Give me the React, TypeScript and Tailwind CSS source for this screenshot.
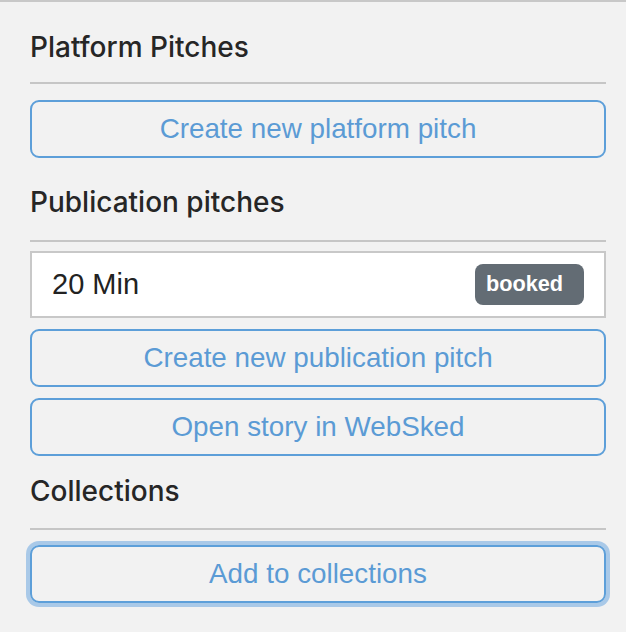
const headingFont = "font-['Inter','Noto_Sans',sans-serif]";
const bodyFont = "font-['Liberation_Sans','Arial',sans-serif]";

function SectionHeading({ title, className }: { title: string; className: string }) {
  return (
    <h2 className={`${headingFont} text-[28px] leading-[32px] font-medium text-[#262626] ${className}`}>{title}</h2>
  );
}

function OutlineButton({ label, focused = false }: { label: string; focused?: boolean }) {
  return (
    <button
      type="button"
      className={`flex h-[58px] w-full items-center justify-center rounded-[9px] border-2 border-[#5d9fd9] bg-transparent ${bodyFont} text-[27.8px] text-[#5b9bd5] ${
        focused ? "shadow-[0_0_0_4px_#a9c9e8]" : ""
      }`}
    >
      {label}
    </button>
  );
}

export default function App() {
  return (
    <div className="min-h-screen border-t-2 border-[#c8c8c8] bg-[#f2f2f2] pt-[29px] pr-[20px] pl-[30px]">
      <SectionHeading title="Platform Pitches" className="" />
      <div className="mt-[19px] h-[2px] bg-[#c6c6c6]" />
      <div className="mt-[16px]">
        <OutlineButton label="Create new platform pitch" />
      </div>

      <SectionHeading title="Publication pitches" className="mt-[28px]" />
      <div className="mt-[22px] h-[2px] bg-[#c6c6c6]" />
      <div className="mt-[9px] flex h-[67px] items-center justify-between border-2 border-[#c8c8c8] bg-white pr-[20px] pl-[20px]">
        <span className={`${bodyFont} text-[29px] text-[#222]`}>20 Min</span>
        <span className={`flex h-[41px] w-[109px] items-center rounded-[8px] bg-[#636c74] pl-[11px] ${bodyFont} text-[21.7px] font-bold text-white`}>
          booked
        </span>
      </div>
      <div className="mt-[11px] flex flex-col gap-[11px]">
        <OutlineButton label="Create new publication pitch" />
        <OutlineButton label="Open story in WebSked" />
      </div>

      <SectionHeading title="Collections" className="mt-[19px]" />
      <div className="mt-[21px] h-[2px] bg-[#c6c6c6]" />
      <div className="mt-[15px]">
        <OutlineButton label="Add to collections" focused />
      </div>
    </div>
  );
}
